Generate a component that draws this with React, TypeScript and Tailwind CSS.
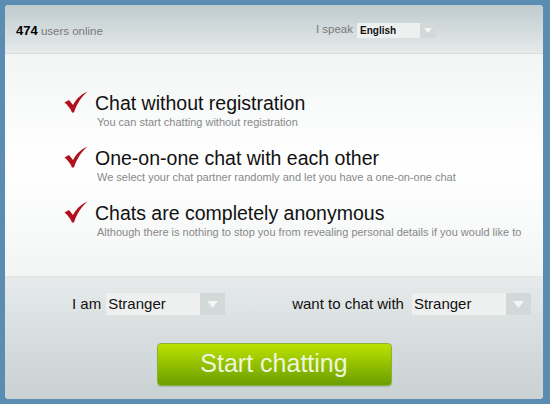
import React from "react";

function Check() {
  return (
    <svg width="24" height="22" viewBox="0 0 24 22" className="shrink-0">
      <path
        d="M0.5 11.5 L5 9 L9 14 C12 8.5 16.5 3.5 23.5 0.5 C17.5 6 13 12 10 21.5 L8 21.5 C6.5 17.5 3.5 14 0.5 11.5 Z"
        fill="#b0111c"
      />
    </svg>
  );
}

function Arrow() {
  return (
    <div className="w-[25px] h-full bg-[#d3d8d9] flex items-center justify-center">
      <svg width="11" height="7" viewBox="0 0 11 7">
        <path d="M0 0 L11 0 L5.5 7 Z" fill="#f4f6f6" />
      </svg>
    </div>
  );
}

function Select({ value, w }: { value: string; w: string }) {
  return (
    <div className={`flex items-center h-[22px] bg-[#eeefef] ${w}`}>
      <span className="flex-1 pl-[2px] text-[15px] text-[#111]">{value}</span>
      <Arrow />
    </div>
  );
}

export default function App() {
  const features = [
    {
      title: "Chat without registration",
      desc: "You can start chatting without registration",
    },
    {
      title: "One-on-one chat with each other",
      desc: "We select your chat partner randomly and let you have a one-on-one chat",
    },
    {
      title: "Chats are completely anonymous",
      desc: "Although there is nothing to stop you from revealing personal details if you would like to",
    },
  ];

  return (
    <div
      className="w-[550px] h-[404px] bg-[#5b8db3] p-[5px] pr-[7px]"
      style={{ fontFamily: '"Liberation Sans", Arial, sans-serif' }}
    >
      <div className="h-full rounded-[4px] overflow-hidden flex flex-col bg-white">
        {/* Header */}
        <div className="h-[49px] shrink-0 bg-gradient-to-b from-[#bfcbcf] to-[#e6eaea] border-b border-[#d9dddd] flex items-center pl-[11px] pr-[107px]">
          <div className="text-[11.5px] text-[#7a7a7a] mt-[4px]">
            <span className="font-bold text-[13px] text-black">474</span> users online
          </div>
          <div className="ml-auto flex items-center gap-[4px] mt-[2px]">
            <span className="text-[11.5px] text-[#7a7a7a]">I speak</span>
            <div className="flex items-center h-[15px] w-[79px] bg-[#eeefef]">
              <span className="flex-1 pl-[3px] text-[10px] text-[#111] font-semibold">English</span>
              <div className="w-[16px] h-full bg-[#d3d8d9] flex items-center justify-center">
                <svg width="8" height="5" viewBox="0 0 8 5">
                  <path d="M0 0 L8 0 L4 5 Z" fill="#f4f6f6" />
                </svg>
              </div>
            </div>
          </div>
        </div>

        {/* Features */}
        <div className="h-[223px] shrink-0 bg-gradient-to-b from-[#f3f5f5] via-white to-[#f3f5f5] pl-[59px] pt-[38px] flex flex-col gap-[18px] border-b border-[#e1e5e5]">
          {features.map((f, i) => (
            <div key={i} className="flex items-start gap-[7px]">
              <div className="mt-[-1px]">
                <Check />
              </div>
              <div>
                <div className="text-[19.5px] leading-[22px] text-[#111]">{f.title}</div>
                <div className="mt-[1px] text-[11px] leading-[14px] text-[#888] pl-[2px]">{f.desc}</div>
              </div>
            </div>
          ))}
        </div>

        {/* Bottom */}
        <div className="flex-1 bg-gradient-to-b from-[#e6eaea] to-[#c9d1d3] flex flex-col items-center">
          <div className="w-full flex items-center pt-[16px] pl-[67px]">
            <span className="text-[15px] text-[#111] mr-[5px]">I am</span>
            <Select value="Stranger" w="w-[119px]" />
            <span className="text-[15px] text-[#111] ml-[67px] mr-[8px]">want to chat with</span>
            <Select value="Stranger" w="w-[119px]" />
          </div>
          <button className="mt-[27px] w-[235px] h-[43px] rounded-[4px] border border-[#8bb23a] bg-gradient-to-b from-[#bce200] to-[#6a9f00] text-[25px] text-[#eef5dd] shadow-[0_1px_1px_rgba(0,0,0,0.15)]">
            Start chatting
          </button>
        </div>
      </div>
    </div>
  );
}
